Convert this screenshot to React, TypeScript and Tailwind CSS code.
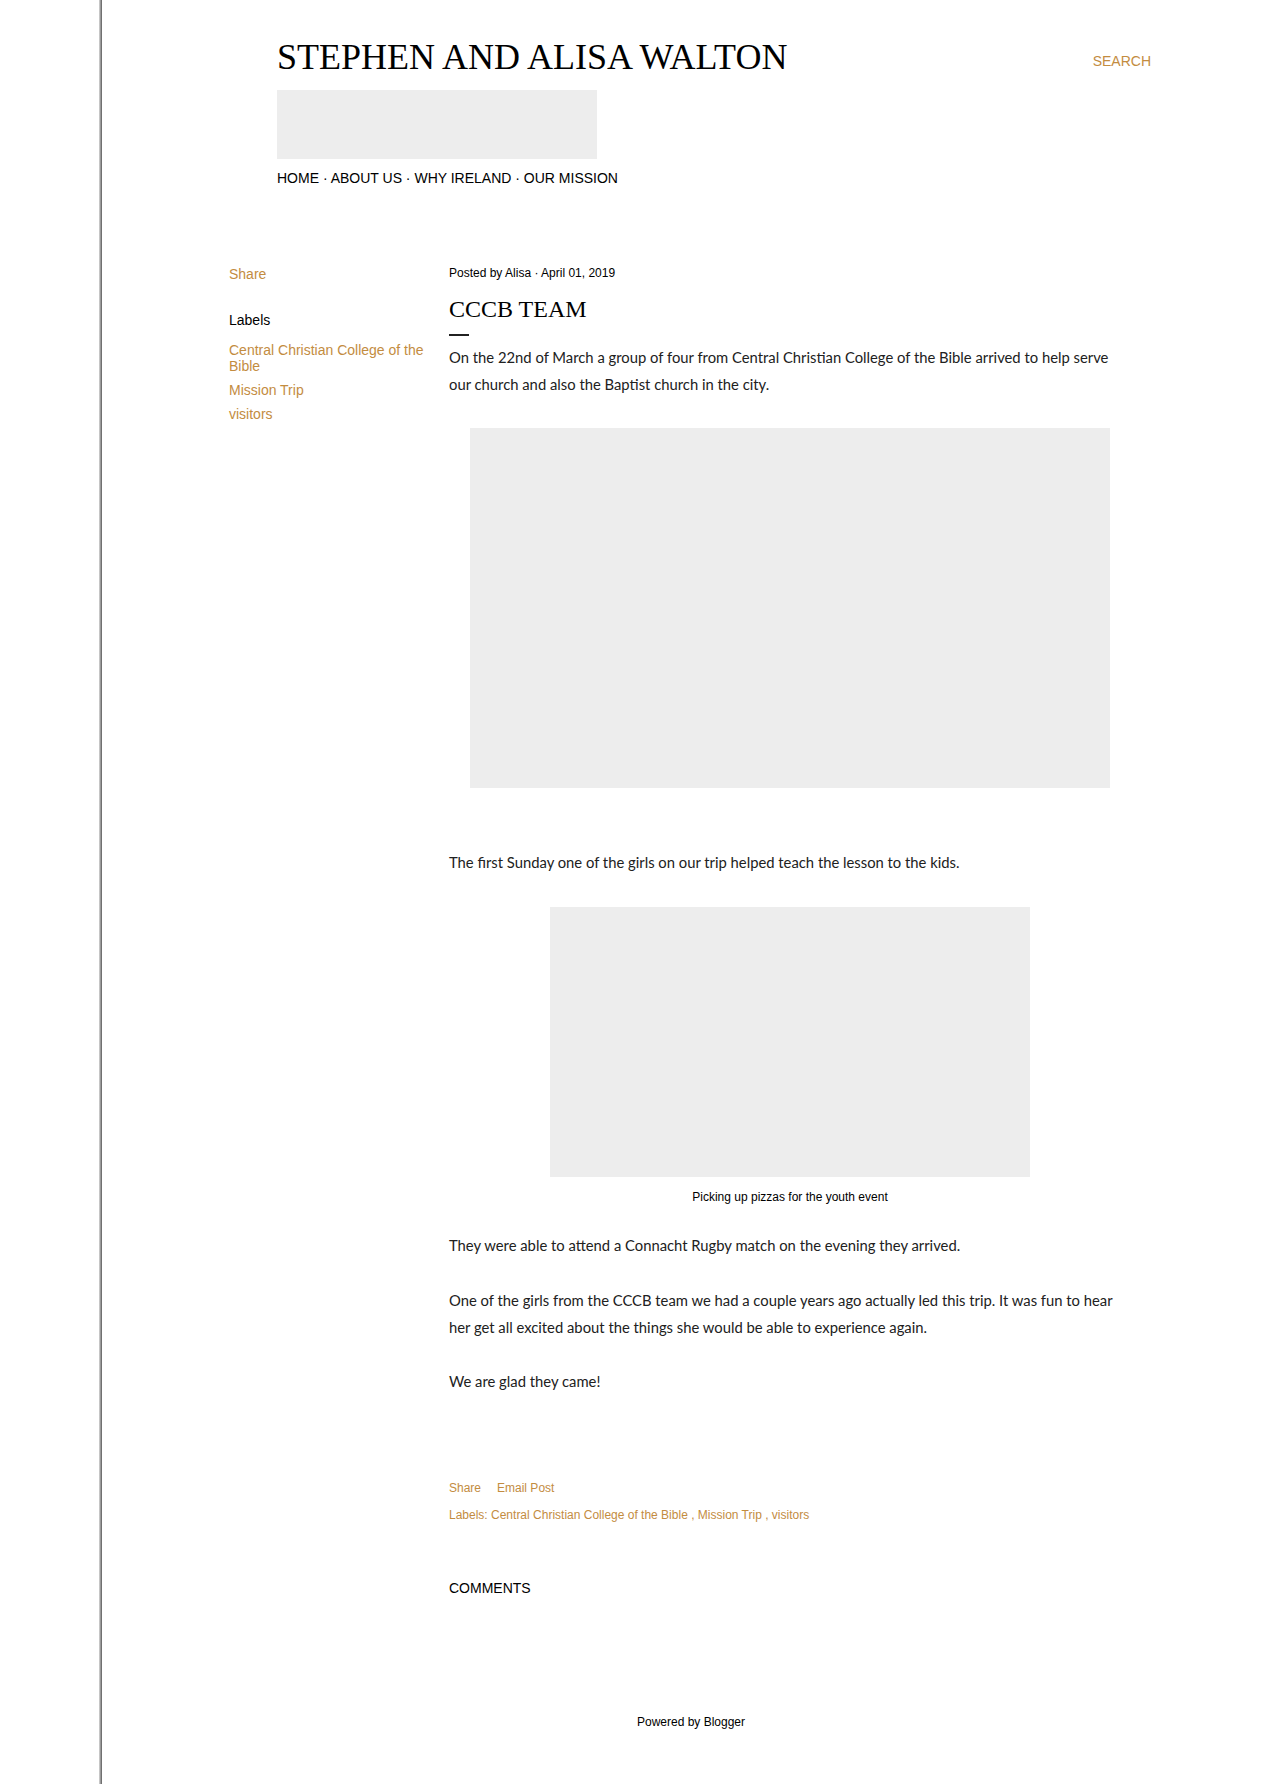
const gold = 'text-[#c38c3f]';

const labels = ['Central Christian College of the Bible', 'Mission Trip', 'visitors'];

function Photo({ w, h }: { w: string; h: string }) {
  return <div className={`mx-auto bg-[#ededed] ${w} ${h}`} />;
}

export default function App() {
  return (
    <div className="flex min-h-[1784px] bg-white font-['Liberation_Sans',Arial,sans-serif] text-[#212121]">
      <div className="w-[99px] shrink-0" />
      <div className="w-[3px] shrink-0 bg-gradient-to-r from-[#dcdcdc] via-[#9a9a9a] to-[#5c5c5c]" />

      <div className="flex-1">
        <header className="ml-[175px] w-[874px] pt-[39px]">
          <div className="flex items-start justify-between">
            <h1 className="font-['Liberation_Serif','Times_New_Roman',serif] text-[36px] leading-[36px] text-black">
              STEPHEN AND ALISA WALTON
            </h1>
            <span className={`mt-[12px] text-[14px] leading-[20px] ${gold}`}>SEARCH</span>
          </div>
          <div className="mt-[15px] h-[69px] w-[320px] bg-[#ededed]" />
          <nav className="mt-[9px] text-[14px] leading-[20px] text-black">
            HOME · ABOUT US · WHY IRELAND · OUR MISSION
          </nav>
        </header>

        <div className="ml-[127px] mt-[76px] flex gap-[20px]">
          <aside className="w-[200px] shrink-0">
            <div className={`text-[14px] leading-[20px] ${gold}`}>Share</div>
            <div className="mt-[26px] text-[14px] leading-[20px] text-black">Labels</div>
            <ul className="mt-[12px] flex flex-col gap-[8px]">
              {labels.map((l) => (
                <li key={l} className={`text-[14px] leading-[16px] ${gold}`}>
                  {l}
                </li>
              ))}
            </ul>
          </aside>

          <article className="w-[682px] pt-px">
            <p className="text-[12px] leading-[16px] text-black">Posted by Alisa · April 01, 2019</p>
            <h2 className="mt-[16px] font-['Liberation_Serif','Times_New_Roman',serif] text-[24px] leading-[24px] text-black">
              CCCB TEAM
            </h2>
            <div className="mt-[13px] h-[2px] w-[20px] bg-[#212121]" />

            <div className="mt-[8px] font-['Lato',sans-serif] text-[14.8px] leading-[27px]">
              <p>
                On the 22nd of March a group of four from Central Christian College of the Bible arrived to help serve
                our church and also the Baptist church in the city.
              </p>
              <div className="mt-[30px]">
                <Photo w="w-[640px]" h="h-[360px]" />
              </div>
              <p className="mt-[61px]">The first Sunday one of the girls on our trip helped teach the lesson to the kids.</p>
              <div className="mt-[31px]">
                <Photo w="w-[480px]" h="h-[270px]" />
                <p className="mt-[12px] text-center font-['Liberation_Sans',Arial,sans-serif] text-[12px] leading-[16px] text-black">
                  Picking up pizzas for the youth event
                </p>
              </div>
              <p className="mt-[27px]">They were able to attend a Connacht Rugby match on the evening they arrived.</p>
              <p className="mt-[28px]">
                One of the girls from the CCCB team we had a couple years ago actually led this trip. It was fun to hear
                her get all excited about the things she would be able to experience again.
              </p>
              <p className="mt-[27px]">We are glad they came!</p>
            </div>

            <div className={`mt-[85px] flex gap-[16px] text-[12px] leading-[16px] ${gold}`}>
              <span>Share</span>
              <span>Email Post</span>
            </div>
            <p className={`mt-[11px] text-[12px] leading-[16px] ${gold}`}>
              Labels: Central Christian College of the Bible , Mission Trip , visitors
            </p>

            <h3 className="mt-[55px] text-[14px] leading-[20px] text-black">COMMENTS</h3>
          </article>
        </div>

        <footer className="mt-[116px] text-center text-[12px] leading-[16px] text-black">Powered by Blogger</footer>
      </div>
    </div>
  );
}
